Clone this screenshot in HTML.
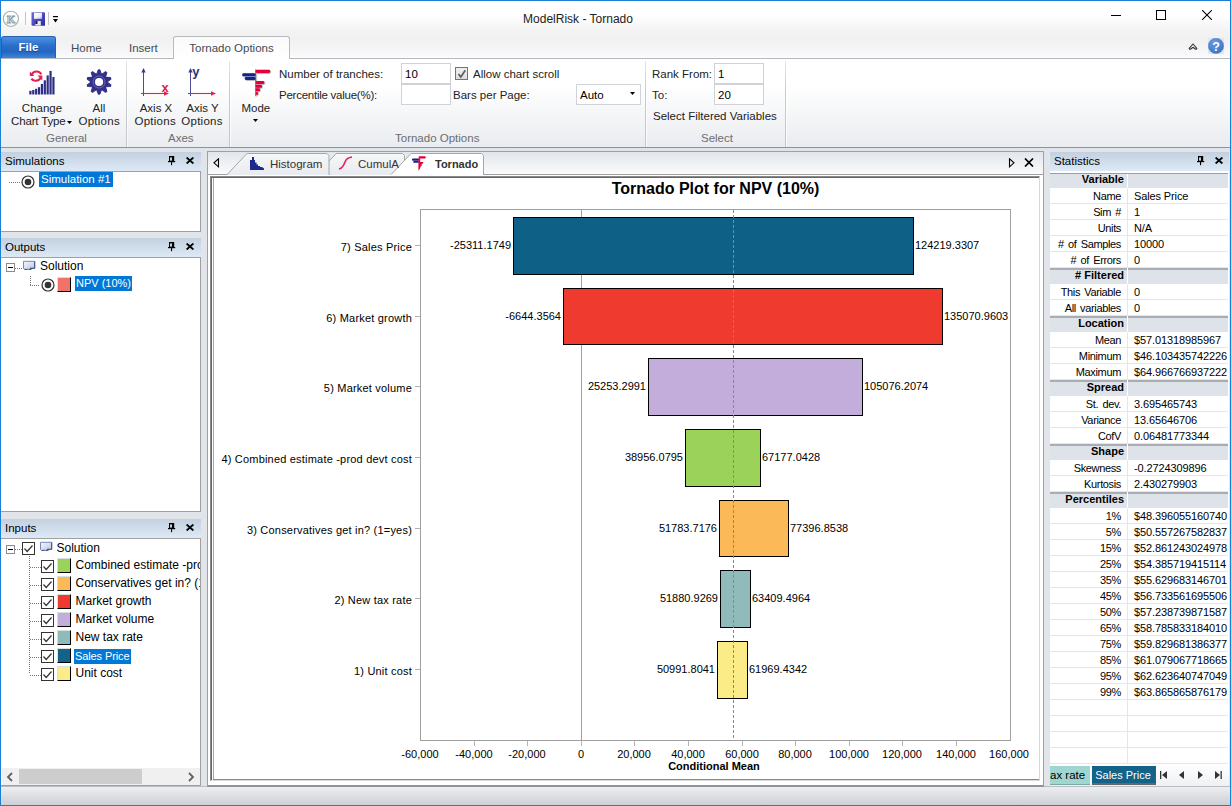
<!DOCTYPE html><html><head><meta charset="utf-8"><style>
*{margin:0;padding:0;box-sizing:border-box}
html,body{width:1231px;height:806px;overflow:hidden;background:#fff;font-family:"Liberation Sans",sans-serif;position:relative}
</style></head><body><div style="position:absolute;left:0px;top:0px;width:1231px;height:806px;background:#fff"></div>
<div style="position:absolute;left:1px;top:1px;width:1229px;height:57px;background:linear-gradient(#ffffff 0px,#ffffff 14px,#f4f4f4 28px,#f1f1f1 37px,#f4f4f4 47px,#f9f9f9 55px,#ffffff 57px)"></div>
<div style="position:absolute;left:1px;top:58px;width:1229px;height:89px;background:linear-gradient(#ffffff,#ffffff 30%,#f3f4f6 70%,#e9ecf0 100%);border-top:1px solid #b5b8be"></div>
<div style="position:absolute;left:1px;top:147px;width:1229px;height:1px;background:#8f9399"></div>
<div style="position:absolute;left:1px;top:148px;width:1229px;height:638px;background:#e1e5ea"></div>
<div style="position:absolute;left:1px;top:786px;width:1229px;height:19px;background:linear-gradient(#eceef1,#e3e5e8 30%,#cdd0d4);border-top:1px solid #b9bcc0"></div>
<div style="position:absolute;left:0px;top:0px;width:1231px;height:1px;background:#1b80d5"></div>
<div style="position:absolute;left:0px;top:805px;width:1231px;height:1px;background:#1b80d5"></div>
<div style="position:absolute;left:0px;top:0px;width:1px;height:806px;background:#1b80d5"></div>
<div style="position:absolute;left:1230px;top:0px;width:1px;height:806px;background:#1b80d5"></div>
<div style="position:absolute;left:0px;top:12px;width:1156px;font-size:12px;line-height:14px;color:#222;text-align:center;white-space:nowrap;">ModelRisk - Tornado</div>
<svg style="position:absolute;left:2px;top:10px" width="18" height="18" viewBox="0 0 18 18">
<circle cx="8.9" cy="8.85" r="7.6" fill="none" stroke="#a3b1b6" stroke-width="1.1"/>
<text x="9" y="13.2" font-size="11" font-family="Liberation Serif" font-weight="bold" text-anchor="middle" fill="#fff" stroke="#8c9ca2" stroke-width="0.9">K</text></svg>
<div style="position:absolute;left:25px;top:12px;width:1px;height:13px;background:#c4c4c4"></div>
<svg style="position:absolute;left:31px;top:12px" width="15" height="14" viewBox="0 0 15 14">
<defs><linearGradient id="fg" x1="0" y1="0" x2="1" y2="1"><stop offset="0" stop-color="#6c6cdc"/><stop offset="1" stop-color="#2a2a9c"/></linearGradient>
<linearGradient id="fl" x1="0" y1="0" x2="1" y2="1"><stop offset="0" stop-color="#ffffff"/><stop offset="0.6" stop-color="#eef0fa"/><stop offset="1" stop-color="#b9bedc"/></linearGradient></defs>
<path d="M0.5 0.3 L13.3 0.3 L14 1 L14 13.8 L1.2 13.8 L0.5 13 Z" fill="url(#fg)"/>
<rect x="3" y="0.8" width="8" height="6" fill="url(#fl)"/>
<rect x="4.3" y="9" width="5.5" height="4.5" fill="#e8e8f0"/><rect x="4.3" y="9" width="2.2" height="3" fill="#222"/>
</svg>
<div style="position:absolute;left:48px;top:12px;width:1px;height:13px;background:#c4c4c4"></div>
<svg style="position:absolute;left:53px;top:15px" width="7" height="8" viewBox="0 0 7 8">
<rect x="0" y="1" width="5" height="1.2" fill="#000"/><path d="M0 4 L5 4 L2.5 7.4 Z" fill="#000"/></svg>
<div style="position:absolute;left:1111px;top:15px;width:10px;height:1px;background:#000"></div>
<div style="position:absolute;left:1156px;top:10px;width:10px;height:10px;border:1px solid #000"></div>
<svg style="position:absolute;left:1202px;top:10px" width="10" height="10" viewBox="0 0 10 10">
<path d="M0 0 L10 10 M10 0 L0 10" stroke="#000" stroke-width="1.05"/></svg>
<div style="position:absolute;left:1px;top:36px;width:55px;height:22px;background:linear-gradient(#4a91e3,#2a6cc8 45%,#2565c2 70%,#3b86dd);border:1px solid #2a5fb0;border-bottom:none;border-radius:3px 3px 0 0"></div>
<div style="position:absolute;left:1px;top:41px;width:55px;font-size:11.5px;line-height:13.5px;color:#fff;text-align:center;white-space:nowrap;text-shadow:0 1px 1px rgba(0,0,0,0.35);font-weight:600">File</div>
<div style="position:absolute;left:71px;top:42px;font-size:11.5px;line-height:13.5px;color:#444b53;text-align:left;white-space:nowrap;">Home</div>
<div style="position:absolute;left:129px;top:42px;font-size:11.5px;line-height:13.5px;color:#444b53;text-align:left;white-space:nowrap;">Insert</div>
<div style="position:absolute;left:173px;top:36px;width:117px;height:23px;background:linear-gradient(#fafafa,#ffffff);border:1px solid #b8babe;border-bottom:none;border-radius:3px 3px 0 0"></div>
<div style="position:absolute;left:173px;top:42px;width:117px;font-size:11.5px;line-height:13.5px;color:#444b53;text-align:center;white-space:nowrap;">Tornado Options</div>
<svg style="position:absolute;left:1188px;top:42px" width="11" height="9" viewBox="0 0 11 9">
<path d="M1.2 6.3 L5 2 L8.8 6.3 Q8.6 7.4 7.6 7.2 L5 5.2 L2.4 7.2 Q1.4 7.4 1.2 6.3 Z" fill="#fff" stroke="#333" stroke-width="1.1" stroke-linejoin="round"/></svg>
<div style="position:absolute;left:1208px;top:38px;width:16px;height:16px;background:#e3e7eb"></div>
<svg style="position:absolute;left:1208px;top:38px" width="16" height="16" viewBox="0 0 16 16">
<defs><radialGradient id="hg" cx="40%" cy="30%" r="70%"><stop offset="0" stop-color="#6a9ce6"/><stop offset="1" stop-color="#3b74c9"/></radialGradient></defs>
<circle cx="8" cy="7.9" r="7.7" fill="url(#hg)" stroke="#5f86be" stroke-width="0.6"/>
<text x="8" y="12.6" font-size="12.5" font-weight="bold" font-family="Liberation Sans" text-anchor="middle" fill="#fff">?</text></svg>
<div style="position:absolute;left:126px;top:61px;width:1px;height:86px;background:linear-gradient(#e6e7e9,#c6c9cd 35%,#c3c6ca)"></div>
<div style="position:absolute;left:127px;top:61px;width:1px;height:86px;background:rgba(255,255,255,0.7)"></div>
<div style="position:absolute;left:229px;top:61px;width:1px;height:86px;background:linear-gradient(#e6e7e9,#c6c9cd 35%,#c3c6ca)"></div>
<div style="position:absolute;left:230px;top:61px;width:1px;height:86px;background:rgba(255,255,255,0.7)"></div>
<div style="position:absolute;left:645px;top:61px;width:1px;height:86px;background:linear-gradient(#e6e7e9,#c6c9cd 35%,#c3c6ca)"></div>
<div style="position:absolute;left:646px;top:61px;width:1px;height:86px;background:rgba(255,255,255,0.7)"></div>
<div style="position:absolute;left:785px;top:61px;width:1px;height:86px;background:linear-gradient(#e6e7e9,#c6c9cd 35%,#c3c6ca)"></div>
<div style="position:absolute;left:786px;top:61px;width:1px;height:86px;background:rgba(255,255,255,0.7)"></div>
<svg style="position:absolute;left:29px;top:70px" width="28" height="26" viewBox="0 0 28 26">
<g fill="#2e2e86"><rect x="0.30" y="20.8" width="2.2" height="3.7"/><rect x="3.18" y="20.0" width="2.2" height="4.5"/><rect x="6.06" y="18.8" width="2.2" height="5.7"/><rect x="8.94" y="17.2" width="2.2" height="7.3"/><rect x="11.82" y="13.9" width="2.2" height="10.6"/><rect x="14.70" y="10.3" width="2.2" height="14.2"/><rect x="17.58" y="5.4" width="2.2" height="19.1"/><rect x="20.46" y="0.9" width="2.2" height="23.6"/><rect x="23.34" y="7.0" width="2.2" height="17.5"/></g>
<path d="M12.2 4.3 C10.8 0.9 5 0.2 2.8 4.4" fill="none" stroke="#e2214f" stroke-width="2.1"/>
<path d="M0.8 1.6 L0.8 5.9 L5.4 5.9 Z" fill="#e2214f"/>
<path d="M2.4 8.6 C4.3 11.8 9.6 11.6 12 7.4" fill="none" stroke="#e2214f" stroke-width="2.1"/>
<path d="M13.3 10.6 L13.3 5.4 L8.6 5.4 Z" fill="#e2214f"/>
</svg>
<div style="position:absolute;left:0px;top:102px;width:84px;font-size:11.5px;line-height:13.5px;color:#222;text-align:center;white-space:nowrap;">Change</div>
<div style="position:absolute;left:11px;top:115px;font-size:11.5px;line-height:13.5px;color:#222;text-align:left;white-space:nowrap;letter-spacing:-0.15px">Chart Type</div>
<svg style="position:absolute;left:67px;top:121px" width="6" height="4"><path d="M0 0 L5 0 L2.5 3 Z" fill="#000"/></svg>
<svg style="position:absolute;left:85px;top:67.5px" width="28" height="28" viewBox="-14.07 -14 28 28">
<g fill="#34318c" stroke="#34318c" stroke-width="1" stroke-linejoin="round"><circle r="8.3"/><path d="M-2.5 -7.4 L-0.8 -12.2 L0.8 -12.2 L2.5 -7.4 Z" transform="rotate(0)"/><path d="M-2.5 -7.4 L-0.8 -12.2 L0.8 -12.2 L2.5 -7.4 Z" transform="rotate(36)"/><path d="M-2.5 -7.4 L-0.8 -12.2 L0.8 -12.2 L2.5 -7.4 Z" transform="rotate(72)"/><path d="M-2.5 -7.4 L-0.8 -12.2 L0.8 -12.2 L2.5 -7.4 Z" transform="rotate(108)"/><path d="M-2.5 -7.4 L-0.8 -12.2 L0.8 -12.2 L2.5 -7.4 Z" transform="rotate(144)"/><path d="M-2.5 -7.4 L-0.8 -12.2 L0.8 -12.2 L2.5 -7.4 Z" transform="rotate(180)"/><path d="M-2.5 -7.4 L-0.8 -12.2 L0.8 -12.2 L2.5 -7.4 Z" transform="rotate(216)"/><path d="M-2.5 -7.4 L-0.8 -12.2 L0.8 -12.2 L2.5 -7.4 Z" transform="rotate(252)"/><path d="M-2.5 -7.4 L-0.8 -12.2 L0.8 -12.2 L2.5 -7.4 Z" transform="rotate(288)"/><path d="M-2.5 -7.4 L-0.8 -12.2 L0.8 -12.2 L2.5 -7.4 Z" transform="rotate(324)"/></g>
<circle r="6" fill="none" stroke="#8a88c0" stroke-width="0.6"/><circle r="4.1" fill="#fff"/>
</svg>
<div style="position:absolute;left:84px;top:102px;width:30px;font-size:11.5px;line-height:13.5px;color:#222;text-align:center;white-space:nowrap;">All</div>
<div style="position:absolute;left:78.5px;top:115px;font-size:11.5px;line-height:13.5px;color:#222;text-align:left;white-space:nowrap;letter-spacing:0.25px">Options</div>
<div style="position:absolute;left:46px;top:132px;font-size:11.5px;line-height:13.5px;color:#6d6d6d;text-align:left;white-space:nowrap;">General</div>
<svg style="position:absolute;left:139px;top:66px" width="32" height="32" viewBox="0 0 32 32">
<path d="M4.5 3 L4.5 30" stroke="#4b4b9a" stroke-width="1"/><path d="M2.3 6.5 L4.5 2 L6.7 6.5 Z" fill="#3a3a8c"/>
<path d="M2 27.5 L27 27.5" stroke="#e2214f" stroke-width="1.1"/><path d="M25 25.3 L30 27.5 L25 29.7 Z" fill="#e2214f"/>
<text x="22.6" y="25.6" font-size="13" font-weight="bold" font-family="Liberation Sans" fill="#e2214f">x</text>
</svg>
<div style="position:absolute;left:135px;top:102px;width:42px;font-size:11.5px;line-height:13.5px;color:#222;text-align:center;white-space:nowrap;">Axis X</div>
<div style="position:absolute;left:134.5px;top:115px;font-size:11.5px;line-height:13.5px;color:#222;text-align:left;white-space:nowrap;letter-spacing:0.25px">Options</div>
<svg style="position:absolute;left:186px;top:66px" width="32" height="32" viewBox="0 0 32 32">
<path d="M4.5 3 L4.5 30" stroke="#4b4b9a" stroke-width="1"/><path d="M2.3 6.5 L4.5 2 L6.7 6.5 Z" fill="#3a3a8c"/>
<path d="M2 27.5 L27 27.5" stroke="#e2214f" stroke-width="1.1"/><path d="M25 25.3 L30 27.5 L25 29.7 Z" fill="#e2214f"/>
<text x="6.3" y="10" font-size="13" font-weight="bold" font-family="Liberation Sans" fill="#2e2e86">y</text>
</svg>
<div style="position:absolute;left:181.5px;top:102px;width:42px;font-size:11.5px;line-height:13.5px;color:#222;text-align:center;white-space:nowrap;">Axis Y</div>
<div style="position:absolute;left:181.3px;top:115px;font-size:11.5px;line-height:13.5px;color:#222;text-align:left;white-space:nowrap;letter-spacing:0.25px">Options</div>
<div style="position:absolute;left:168px;top:132px;font-size:11.5px;line-height:13.5px;color:#6d6d6d;text-align:left;white-space:nowrap;">Axes</div>
<svg style="position:absolute;left:236px;top:64px" width="44" height="36" viewBox="0 0 44 36">
<defs><filter id="sh" x="-20%" y="-20%" width="150%" height="150%"><feDropShadow dx="0.6" dy="0.6" stdDeviation="0.5" flood-color="#000" flood-opacity="0.45"/></filter></defs>
<g filter="url(#sh)">
<rect x="19.2" y="5.4" width="0.9" height="26.6" fill="#777"/>
<rect x="19.6" y="5.8" width="14.6" height="3.1" rx="1.4" fill="#e6003a"/>
<rect x="6.2" y="9.2" width="13.4" height="3.1" rx="1.4" fill="#16208a"/>
<rect x="8.7" y="13" width="10.9" height="3" rx="1.4" fill="#16208a"/>
<rect x="19.6" y="17" width="8.7" height="2.9" rx="1.2" fill="#e6003a"/>
<rect x="19.6" y="20.8" width="6.4" height="2.9" rx="1.2" fill="#e6003a"/>
<rect x="19.6" y="24.3" width="4.4" height="2.9" rx="1.2" fill="#e6003a"/>
<rect x="19.6" y="27.9" width="2.4" height="2.9" rx="1" fill="#e6003a"/>
</g></svg>
<div style="position:absolute;left:241.5px;top:102px;font-size:11.5px;line-height:13.5px;color:#222;text-align:left;white-space:nowrap;">Mode</div>
<svg style="position:absolute;left:253px;top:119px" width="6" height="4"><path d="M0 0 L5 0 L2.5 3 Z" fill="#000"/></svg>
<div style="position:absolute;left:279px;top:68px;font-size:11.5px;line-height:13.5px;color:#222;text-align:left;white-space:nowrap;">Number of tranches:</div>
<div style="position:absolute;left:279px;top:89px;font-size:11.5px;line-height:13.5px;color:#222;text-align:left;white-space:nowrap;letter-spacing:-0.25px">Percentile value(%):</div>
<div style="position:absolute;left:401px;top:63px;width:50px;height:21px;background:#fff;border:1px solid #cfd2d6"></div>
<div style="position:absolute;left:401px;top:84px;width:50px;height:21px;background:#fff;border:1px solid #cfd2d6"></div>
<div style="position:absolute;left:405px;top:68px;font-size:11.5px;line-height:13.5px;color:#000;text-align:left;white-space:nowrap;">10</div>
<div style="position:absolute;left:455px;top:67px;width:13px;height:13px;background:linear-gradient(#f0f0f0,#dedede);border:1px solid #747474"></div>
<svg style="position:absolute;left:457px;top:69px" width="10" height="10"><path d="M1.5 5 L3.8 8 L8.3 1.2" fill="none" stroke="#5e5e5e" stroke-width="1.7"/></svg>
<div style="position:absolute;left:473px;top:68px;font-size:11.5px;line-height:13.5px;color:#222;text-align:left;white-space:nowrap;">Allow chart scroll</div>
<div style="position:absolute;left:453px;top:89px;font-size:11.5px;line-height:13.5px;color:#222;text-align:left;white-space:nowrap;">Bars per Page:</div>
<div style="position:absolute;left:576px;top:84px;width:65px;height:21px;background:#fff;border:1px solid #cfd2d6"></div>
<div style="position:absolute;left:580px;top:89px;font-size:11.5px;line-height:13.5px;color:#000;text-align:left;white-space:nowrap;">Auto</div>
<svg style="position:absolute;left:630px;top:92px" width="6" height="4"><path d="M0 0 L5 0 L2.5 3 Z" fill="#000"/></svg>
<div style="position:absolute;left:395px;top:132px;font-size:11.5px;line-height:13.5px;color:#6d6d6d;text-align:left;white-space:nowrap;">Tornado Options</div>
<div style="position:absolute;left:652px;top:68px;font-size:11.5px;line-height:13.5px;color:#222;text-align:left;white-space:nowrap;">Rank From:</div>
<div style="position:absolute;left:652px;top:89px;font-size:11.5px;line-height:13.5px;color:#222;text-align:left;white-space:nowrap;">To:</div>
<div style="position:absolute;left:714px;top:63px;width:50px;height:21px;background:#fff;border:1px solid #cfd2d6"></div>
<div style="position:absolute;left:714px;top:84px;width:50px;height:21px;background:#fff;border:1px solid #cfd2d6"></div>
<div style="position:absolute;left:718px;top:68px;font-size:11.5px;line-height:13.5px;color:#000;text-align:left;white-space:nowrap;">1</div>
<div style="position:absolute;left:718px;top:89px;font-size:11.5px;line-height:13.5px;color:#000;text-align:left;white-space:nowrap;">20</div>
<div style="position:absolute;left:653px;top:110px;font-size:11.5px;line-height:13.5px;color:#222;text-align:left;white-space:nowrap;">Select Filtered Variables</div>
<div style="position:absolute;left:701px;top:132px;font-size:11.5px;line-height:13.5px;color:#6d6d6d;text-align:left;white-space:nowrap;">Select</div>
<div style="position:absolute;left:1px;top:152px;width:200px;height:19px;background:linear-gradient(#c3d0df,#dde9f6);"></div>
<div style="position:absolute;left:5px;top:155px;font-size:11.5px;line-height:13.5px;color:#000;text-align:left;white-space:nowrap;">Simulations</div>
<svg style="position:absolute;left:167px;top:155px" width="10" height="11" viewBox="0 0 10 11">
<rect x="2" y="1" width="5.2" height="5.2" fill="#000"/><rect x="3.2" y="2.4" width="1.6" height="3.2" fill="#fff"/>
<rect x="1" y="6" width="7.2" height="1.2" fill="#000"/><rect x="4" y="7" width="1.1" height="3.2" fill="#000"/></svg>
<svg style="position:absolute;left:186px;top:157px" width="8" height="7" viewBox="0 0 8 7">
<path d="M0.6 0.5 L7.4 6.5 M7.4 0.5 L0.6 6.5" stroke="#000" stroke-width="1.8"/></svg>
<div style="position:absolute;left:1px;top:171px;width:200px;height:61px;background:#fff;border-right:1px solid #a0a0a0;border-bottom:1px solid #a0a0a0;border-top:1px solid #a0a0a0"></div>
<div style="position:absolute;left:1px;top:238px;width:200px;height:19px;background:linear-gradient(#c3d0df,#dde9f6);"></div>
<div style="position:absolute;left:5px;top:241px;font-size:11.5px;line-height:13.5px;color:#000;text-align:left;white-space:nowrap;">Outputs</div>
<svg style="position:absolute;left:167px;top:241px" width="10" height="11" viewBox="0 0 10 11">
<rect x="2" y="1" width="5.2" height="5.2" fill="#000"/><rect x="3.2" y="2.4" width="1.6" height="3.2" fill="#fff"/>
<rect x="1" y="6" width="7.2" height="1.2" fill="#000"/><rect x="4" y="7" width="1.1" height="3.2" fill="#000"/></svg>
<svg style="position:absolute;left:186px;top:243px" width="8" height="7" viewBox="0 0 8 7">
<path d="M0.6 0.5 L7.4 6.5 M7.4 0.5 L0.6 6.5" stroke="#000" stroke-width="1.8"/></svg>
<div style="position:absolute;left:1px;top:257px;width:200px;height:255px;background:#fff;border-right:1px solid #a0a0a0;border-bottom:1px solid #a0a0a0;border-top:1px solid #a0a0a0"></div>
<div style="position:absolute;left:1px;top:519px;width:200px;height:19px;background:linear-gradient(#c3d0df,#dde9f6);"></div>
<div style="position:absolute;left:5px;top:522px;font-size:11.5px;line-height:13.5px;color:#000;text-align:left;white-space:nowrap;">Inputs</div>
<svg style="position:absolute;left:167px;top:522px" width="10" height="11" viewBox="0 0 10 11">
<rect x="2" y="1" width="5.2" height="5.2" fill="#000"/><rect x="3.2" y="2.4" width="1.6" height="3.2" fill="#fff"/>
<rect x="1" y="6" width="7.2" height="1.2" fill="#000"/><rect x="4" y="7" width="1.1" height="3.2" fill="#000"/></svg>
<svg style="position:absolute;left:186px;top:524px" width="8" height="7" viewBox="0 0 8 7">
<path d="M0.6 0.5 L7.4 6.5 M7.4 0.5 L0.6 6.5" stroke="#000" stroke-width="1.8"/></svg>
<div style="position:absolute;left:1px;top:538px;width:200px;height:248px;background:#fff;border-right:1px solid #a0a0a0;border-bottom:1px solid #a0a0a0;border-top:1px solid #a0a0a0"></div>
<div style="position:absolute;left:9px;top:182px;width:11px;height:1px;background:repeating-linear-gradient(90deg,#777 0 1px,transparent 1px 2px)"></div>
<svg style="position:absolute;left:21px;top:175px" width="14" height="14" viewBox="0 0 14 14">
<circle cx="7" cy="7" r="6" fill="#fff" stroke="#333" stroke-width="1.2"/><circle cx="7" cy="7" r="3.3" fill="#333"/></svg>
<div style="position:absolute;left:39px;top:172px;height:15px;padding:0 2px;background:#0078d7;color:#fff;font-size:11.5px;line-height:15px;white-space:nowrap">Simulation #1</div>
<div style="position:absolute;left:6px;top:263px;width:9px;height:9px;border:1px solid #8a8a8a;background:#fff"></div>
<div style="position:absolute;left:8px;top:267px;width:5px;height:1px;background:#000"></div>
<div style="position:absolute;left:15px;top:268px;width:7px;height:1px;background:repeating-linear-gradient(90deg,#777 0 1px,transparent 1px 2px)"></div>
<svg style="position:absolute;left:22px;top:260px" width="15" height="14" viewBox="0 0 15 14">
<defs><linearGradient id="sg22260" x1="0" y1="0" x2="1" y2="1"><stop offset="0" stop-color="#f6f8fc"/><stop offset="1" stop-color="#bcc6de"/></linearGradient></defs>
<path d="M1.5 1.3 L12.7 1.3 L12.7 8.3 L8 8.3 L7 9.3 L2.5 9.3 L1.5 8.3 Z" fill="url(#sg22260)" stroke="#7389b8" stroke-width="1"/>
<path d="M12.7 1.5 L12.7 8.3 L8 8.3" fill="none" stroke="#3c4f78" stroke-width="1"/>
<path d="M2.5 9.5 L5.5 9.5 M6.8 9.5 L9.5 9.5" stroke="#4b5f8c" stroke-width="1.2"/>
</svg>
<div style="position:absolute;left:40px;top:258.5px;font-size:12px;line-height:14px;color:#000;text-align:left;white-space:nowrap;">Solution</div>
<div style="position:absolute;left:30px;top:276px;width:1px;height:9px;background:repeating-linear-gradient(180deg,#777 0 1px,transparent 1px 2px)"></div>
<div style="position:absolute;left:30px;top:285px;width:10px;height:1px;background:repeating-linear-gradient(90deg,#777 0 1px,transparent 1px 2px)"></div>
<svg style="position:absolute;left:41px;top:278px" width="14" height="14" viewBox="0 0 14 14">
<circle cx="7" cy="7" r="6" fill="#fff" stroke="#333" stroke-width="1.2"/><circle cx="7" cy="7" r="3.3" fill="#333"/></svg>
<div style="position:absolute;left:57px;top:277px;width:14px;height:15px;background:#f0736a;border-right:1px solid #000;border-bottom:1px solid #000;border-left:1px solid #d8e0e0;border-top:1px solid #d8e0e0"></div>
<div style="position:absolute;left:75px;top:276px;height:15px;padding:0 1px;background:#0078d7;color:#fff;font-size:11.5px;line-height:15px;white-space:nowrap"><span style="font-size:11px">NPV (10%)</span></div>
<div style="position:absolute;left:6px;top:545px;width:9px;height:9px;border:1px solid #8a8a8a;background:#fff"></div>
<div style="position:absolute;left:8px;top:549px;width:5px;height:1px;background:#000"></div>
<div style="position:absolute;left:15px;top:549px;width:7px;height:1px;background:repeating-linear-gradient(90deg,#777 0 1px,transparent 1px 2px)"></div>
<div style="position:absolute;left:22px;top:542px;width:13px;height:13px;border:1px solid #333;background:#fff"></div>
<svg style="position:absolute;left:23px;top:543px" width="11" height="11"><path d="M1.5 5.5 L4.2 8.5 L9.5 2.5" fill="none" stroke="#333" stroke-width="1.2"/></svg>
<svg style="position:absolute;left:39px;top:541px" width="15" height="14" viewBox="0 0 15 14">
<defs><linearGradient id="sg39541" x1="0" y1="0" x2="1" y2="1"><stop offset="0" stop-color="#f6f8fc"/><stop offset="1" stop-color="#bcc6de"/></linearGradient></defs>
<path d="M1.5 1.3 L12.7 1.3 L12.7 8.3 L8 8.3 L7 9.3 L2.5 9.3 L1.5 8.3 Z" fill="url(#sg39541)" stroke="#7389b8" stroke-width="1"/>
<path d="M12.7 1.5 L12.7 8.3 L8 8.3" fill="none" stroke="#3c4f78" stroke-width="1"/>
<path d="M2.5 9.5 L5.5 9.5 M6.8 9.5 L9.5 9.5" stroke="#4b5f8c" stroke-width="1.2"/>
</svg>
<div style="position:absolute;left:56.5px;top:540.5px;font-size:12px;line-height:14px;color:#000;text-align:left;white-space:nowrap;">Solution</div>
<div style="position:absolute;left:29px;top:556px;width:1px;height:118px;background:repeating-linear-gradient(180deg,#777 0 1px,transparent 1px 2px)"></div>
<div style="position:absolute;left:30px;top:567px;width:11px;height:1px;background:repeating-linear-gradient(90deg,#777 0 1px,transparent 1px 2px)"></div>
<div style="position:absolute;left:41px;top:560px;width:13px;height:13px;border:1px solid #333;background:#fff"></div>
<svg style="position:absolute;left:42px;top:561px" width="11" height="11"><path d="M1.5 5.5 L4.2 8.5 L9.5 2.5" fill="none" stroke="#333" stroke-width="1.2"/></svg>
<div style="position:absolute;left:57px;top:558px;width:14px;height:15px;background:#9bd35a;border-right:1px solid #000;border-bottom:1px solid #000;border-left:1px solid #d8e0e0;border-top:1px solid #d8e0e0"></div>
<div style="position:absolute;left:75.5px;top:557.5px;font-size:12px;line-height:14px;color:#000;text-align:left;white-space:nowrap;">Combined estimate -prod devt cost</div>
<div style="position:absolute;left:30px;top:585px;width:11px;height:1px;background:repeating-linear-gradient(90deg,#777 0 1px,transparent 1px 2px)"></div>
<div style="position:absolute;left:41px;top:578px;width:13px;height:13px;border:1px solid #333;background:#fff"></div>
<svg style="position:absolute;left:42px;top:579px" width="11" height="11"><path d="M1.5 5.5 L4.2 8.5 L9.5 2.5" fill="none" stroke="#333" stroke-width="1.2"/></svg>
<div style="position:absolute;left:57px;top:576px;width:14px;height:15px;background:#fbb957;border-right:1px solid #000;border-bottom:1px solid #000;border-left:1px solid #d8e0e0;border-top:1px solid #d8e0e0"></div>
<div style="position:absolute;left:75.5px;top:575.5px;font-size:12px;line-height:14px;color:#000;text-align:left;white-space:nowrap;">Conservatives get in? (1=yes)</div>
<div style="position:absolute;left:30px;top:603px;width:11px;height:1px;background:repeating-linear-gradient(90deg,#777 0 1px,transparent 1px 2px)"></div>
<div style="position:absolute;left:41px;top:596px;width:13px;height:13px;border:1px solid #333;background:#fff"></div>
<svg style="position:absolute;left:42px;top:597px" width="11" height="11"><path d="M1.5 5.5 L4.2 8.5 L9.5 2.5" fill="none" stroke="#333" stroke-width="1.2"/></svg>
<div style="position:absolute;left:57px;top:594px;width:14px;height:15px;background:#ef3a30;border-right:1px solid #000;border-bottom:1px solid #000;border-left:1px solid #d8e0e0;border-top:1px solid #d8e0e0"></div>
<div style="position:absolute;left:75.5px;top:593.5px;font-size:12px;line-height:14px;color:#000;text-align:left;white-space:nowrap;">Market growth</div>
<div style="position:absolute;left:30px;top:621px;width:11px;height:1px;background:repeating-linear-gradient(90deg,#777 0 1px,transparent 1px 2px)"></div>
<div style="position:absolute;left:41px;top:614px;width:13px;height:13px;border:1px solid #333;background:#fff"></div>
<svg style="position:absolute;left:42px;top:615px" width="11" height="11"><path d="M1.5 5.5 L4.2 8.5 L9.5 2.5" fill="none" stroke="#333" stroke-width="1.2"/></svg>
<div style="position:absolute;left:57px;top:612px;width:14px;height:15px;background:#c3aedb;border-right:1px solid #000;border-bottom:1px solid #000;border-left:1px solid #d8e0e0;border-top:1px solid #d8e0e0"></div>
<div style="position:absolute;left:75.5px;top:611.5px;font-size:12px;line-height:14px;color:#000;text-align:left;white-space:nowrap;">Market volume</div>
<div style="position:absolute;left:30px;top:639px;width:11px;height:1px;background:repeating-linear-gradient(90deg,#777 0 1px,transparent 1px 2px)"></div>
<div style="position:absolute;left:41px;top:632px;width:13px;height:13px;border:1px solid #333;background:#fff"></div>
<svg style="position:absolute;left:42px;top:633px" width="11" height="11"><path d="M1.5 5.5 L4.2 8.5 L9.5 2.5" fill="none" stroke="#333" stroke-width="1.2"/></svg>
<div style="position:absolute;left:57px;top:630px;width:14px;height:15px;background:#8fbcbb;border-right:1px solid #000;border-bottom:1px solid #000;border-left:1px solid #d8e0e0;border-top:1px solid #d8e0e0"></div>
<div style="position:absolute;left:75.5px;top:629.5px;font-size:12px;line-height:14px;color:#000;text-align:left;white-space:nowrap;">New tax rate</div>
<div style="position:absolute;left:30px;top:657px;width:11px;height:1px;background:repeating-linear-gradient(90deg,#777 0 1px,transparent 1px 2px)"></div>
<div style="position:absolute;left:41px;top:650px;width:13px;height:13px;border:1px solid #333;background:#fff"></div>
<svg style="position:absolute;left:42px;top:651px" width="11" height="11"><path d="M1.5 5.5 L4.2 8.5 L9.5 2.5" fill="none" stroke="#333" stroke-width="1.2"/></svg>
<div style="position:absolute;left:57px;top:648px;width:14px;height:15px;background:#136287;border-right:1px solid #000;border-bottom:1px solid #000;border-left:1px solid #d8e0e0;border-top:1px solid #d8e0e0"></div>
<div style="position:absolute;left:74px;top:649px;height:15px;padding:0 1px;background:#0078d7;color:#fff;font-size:11.5px;line-height:15px;white-space:nowrap"><span style="font-size:11px;letter-spacing:-0.1px">Sales Price</span></div>
<div style="position:absolute;left:30px;top:675px;width:11px;height:1px;background:repeating-linear-gradient(90deg,#777 0 1px,transparent 1px 2px)"></div>
<div style="position:absolute;left:41px;top:668px;width:13px;height:13px;border:1px solid #333;background:#fff"></div>
<svg style="position:absolute;left:42px;top:669px" width="11" height="11"><path d="M1.5 5.5 L4.2 8.5 L9.5 2.5" fill="none" stroke="#333" stroke-width="1.2"/></svg>
<div style="position:absolute;left:57px;top:666px;width:14px;height:15px;background:#fbec88;border-right:1px solid #000;border-bottom:1px solid #000;border-left:1px solid #d8e0e0;border-top:1px solid #d8e0e0"></div>
<div style="position:absolute;left:75.5px;top:665.5px;font-size:12px;line-height:14px;color:#000;text-align:left;white-space:nowrap;">Unit cost</div>
<div style="position:absolute;left:201px;top:538px;width:6px;height:248px;background:#e1e5ea"></div>
<div style="position:absolute;left:200px;top:538px;width:1px;height:248px;background:#a0a0a0"></div>
<div style="position:absolute;left:2px;top:768px;width:198px;height:17px;background:#f0f0f0"></div>
<div style="position:absolute;left:19px;top:769px;width:123px;height:15px;background:#cdcdcd"></div>
<svg style="position:absolute;left:6px;top:772px" width="8" height="10"><path d="M6 1 L2 5 L6 9" fill="none" stroke="#606060" stroke-width="1.8"/></svg>
<svg style="position:absolute;left:187px;top:772px" width="8" height="10"><path d="M2 1 L6 5 L2 9" fill="none" stroke="#606060" stroke-width="1.8"/></svg>
<div style="position:absolute;left:207px;top:151px;width:837px;height:636px;background:#fff;border:1px solid #a0a0a0;border-bottom:2px solid #909398"></div>
<div style="position:absolute;left:208px;top:152px;width:835px;height:22px;background:linear-gradient(#e2e6eb,#fbfbfc)"></div>
<div style="position:absolute;left:208px;top:174px;width:835px;height:1px;background:#a0a0a0"></div>
<svg style="position:absolute;left:213px;top:158px" width="7" height="10"><path d="M5.5 0.8 L5.5 8.8 L1 4.8 Z" fill="none" stroke="#000" stroke-width="1.1"/></svg>
<svg style="position:absolute;left:1008px;top:158px" width="7" height="10"><path d="M1.5 0.8 L1.5 8.8 L6 4.8 Z" fill="none" stroke="#000" stroke-width="1.1"/></svg>
<svg style="position:absolute;left:1024px;top:158px" width="10" height="9" viewBox="0 0 10 9"><path d="M1 0.5 L9 8.5 M9 0.5 L1 8.5" stroke="#000" stroke-width="1.7"/></svg>
<svg style="position:absolute;left:208px;top:152px" width="300" height="24" viewBox="0 0 300 24">
<defs><linearGradient id="tg" x1="0" y1="0" x2="0" y2="1"><stop offset="0" stop-color="#f6f7f9"/><stop offset="1" stop-color="#e8ebef"/></linearGradient></defs>
<path d="M107.8 23 L128.3 1.5 L194.5 1.5 L196.5 3.5 L196.5 23" fill="url(#tg)" stroke="#a6a6a6" stroke-width="1"/>
<path d="M18.6 23 L39 1.5 L119 1.5 L121 3.5 L121 23" fill="url(#tg)" stroke="#a6a6a6" stroke-width="1"/>
<path d="M182.7 23 L203 1.5 L273.5 1.5 L275.5 3.5 L275.5 23" fill="#ffffff" stroke="#a6a6a6" stroke-width="1"/>
<rect x="183.5" y="22" width="91.5" height="2" fill="#fff"/>
</svg>
<svg style="position:absolute;left:250px;top:157px" width="14" height="13" viewBox="0 0 14 13">
<path d="M0 13 L0 3 L2 3 L2 0 L4 0 L4 3 L5 3 L5 5.5 L6.5 5.5 L6.5 7.5 L8 7.5 L8 9 L10 9 L10 10 L12 10 L14 11.5 L14 13 Z" fill="#1f2a8f"/></svg>
<div style="position:absolute;left:270px;top:158px;font-size:11.5px;line-height:13.5px;color:#333;text-align:left;white-space:nowrap;">Histogram</div>
<svg style="position:absolute;left:338px;top:156px" width="15" height="14" viewBox="0 0 15 14">
<path d="M1 13 C5 12 6 9 7 6 C8 3 10 1.5 14 1" fill="none" stroke="#e0245a" stroke-width="1.6"/></svg>
<div style="position:absolute;left:358px;top:158px;font-size:11.5px;line-height:13.5px;color:#333;text-align:left;white-space:nowrap;">CumulA</div>
<svg style="position:absolute;left:411px;top:155px" width="17" height="17" viewBox="0 0 17 17">
<rect x="7.6" y="1.2" width="7.2" height="2.4" rx="1" fill="#e6003a"/>
<rect x="1" y="3.6" width="7" height="2.1" rx="1" fill="#16208a"/>
<rect x="2.2" y="6" width="5.8" height="1.8" rx="0.9" fill="#16208a"/>
<path d="M7.4 3.3 L9.2 3.3 L9.2 7 L12.4 7 L11.6 9 L9.2 9 L11 9.4 L10.6 11 L9.2 11 L10 11.4 L9 13 L9.2 13 L8 15.2 L7.4 15.2 Z" fill="#e6003a"/>
</svg>
<div style="position:absolute;left:435px;top:158px;font-size:11px;line-height:13px;color:#333;font-weight:bold;text-align:left;white-space:nowrap;">Tornado</div>
<div style="position:absolute;left:210px;top:176px;width:830px;height:605px;background:#fff;border-top:1px solid #8a8a8a;border-left:1px solid #8a8a8a;border-right:1px solid #d8d8d8;border-bottom:1px solid #d8d8d8"></div>
<div style="position:absolute;left:211px;top:177px;width:828px;height:1px;background:#666"></div>
<div style="position:absolute;left:211px;top:177px;width:1px;height:603px;background:#666"></div>
<div style="position:absolute;left:213px;top:178px;width:1px;height:602px;background:#a8a8a8"></div>
<div style="position:absolute;left:213px;top:779px;width:826px;height:1px;background:#8a8a8a"></div>
<div style="position:absolute;left:210px;top:180px;width:1011px;font-size:16px;line-height:18px;color:#000;font-weight:bold;text-align:center;white-space:nowrap;">Tornado Plot for NPV (10%)</div>
<div style="position:absolute;left:420px;top:209px;width:591px;height:532px;border:1px solid #a0a0a0"></div>
<div style="position:absolute;left:581px;top:209px;width:1px;height:531px;background:#a0a0a0"></div>
<div style="position:absolute;left:513px;top:217px;width:401px;height:58px;background:#0f6086;border:1px solid #000"></div>
<div style="position:absolute;left:0px;top:241px;width:412px;font-size:11px;line-height:13px;color:#000;text-align:right;white-space:nowrap;letter-spacing:0.2px">7) Sales Price</div>
<div style="position:absolute;left:415px;top:245px;width:5px;height:1px;background:#b0b0b0"></div>
<div style="position:absolute;left:211px;top:239px;width:300px;font-size:11px;line-height:13px;color:#000;text-align:right;white-space:nowrap;">-25311.1749</div>
<div style="position:absolute;left:915px;top:239px;font-size:11px;line-height:13px;color:#000;text-align:left;white-space:nowrap;">124219.3307</div>
<div style="position:absolute;left:563px;top:288px;width:380px;height:57px;background:#ef3a30;border:1px solid #000"></div>
<div style="position:absolute;left:0px;top:312px;width:412px;font-size:11px;line-height:13px;color:#000;text-align:right;white-space:nowrap;letter-spacing:0.2px">6) Market growth</div>
<div style="position:absolute;left:415px;top:316px;width:5px;height:1px;background:#b0b0b0"></div>
<div style="position:absolute;left:261px;top:310px;width:300px;font-size:11px;line-height:13px;color:#000;text-align:right;white-space:nowrap;">-6644.3564</div>
<div style="position:absolute;left:944px;top:310px;font-size:11px;line-height:13px;color:#000;text-align:left;white-space:nowrap;">135070.9603</div>
<div style="position:absolute;left:648px;top:358px;width:215px;height:58px;background:#c3aedb;border:1px solid #000"></div>
<div style="position:absolute;left:0px;top:382px;width:412px;font-size:11px;line-height:13px;color:#000;text-align:right;white-space:nowrap;letter-spacing:0.2px">5) Market volume</div>
<div style="position:absolute;left:415px;top:386px;width:5px;height:1px;background:#b0b0b0"></div>
<div style="position:absolute;left:346px;top:380px;width:300px;font-size:11px;line-height:13px;color:#000;text-align:right;white-space:nowrap;">25253.2991</div>
<div style="position:absolute;left:864px;top:380px;font-size:11px;line-height:13px;color:#000;text-align:left;white-space:nowrap;">105076.2074</div>
<div style="position:absolute;left:685px;top:429px;width:76px;height:58px;background:#9bd35a;border:1px solid #000"></div>
<div style="position:absolute;left:0px;top:453px;width:412px;font-size:11px;line-height:13px;color:#000;text-align:right;white-space:nowrap;letter-spacing:0.2px">4) Combined estimate -prod devt cost</div>
<div style="position:absolute;left:415px;top:457px;width:5px;height:1px;background:#b0b0b0"></div>
<div style="position:absolute;left:383px;top:451px;width:300px;font-size:11px;line-height:13px;color:#000;text-align:right;white-space:nowrap;">38956.0795</div>
<div style="position:absolute;left:762px;top:451px;font-size:11px;line-height:13px;color:#000;text-align:left;white-space:nowrap;">67177.0428</div>
<div style="position:absolute;left:719px;top:500px;width:70px;height:57px;background:#fbb957;border:1px solid #000"></div>
<div style="position:absolute;left:0px;top:524px;width:412px;font-size:11px;line-height:13px;color:#000;text-align:right;white-space:nowrap;letter-spacing:0.2px">3) Conservatives get in? (1=yes)</div>
<div style="position:absolute;left:415px;top:528px;width:5px;height:1px;background:#b0b0b0"></div>
<div style="position:absolute;left:417px;top:522px;width:300px;font-size:11px;line-height:13px;color:#000;text-align:right;white-space:nowrap;">51783.7176</div>
<div style="position:absolute;left:790px;top:522px;font-size:11px;line-height:13px;color:#000;text-align:left;white-space:nowrap;">77396.8538</div>
<div style="position:absolute;left:720px;top:570px;width:31px;height:58px;background:#8fbcbb;border:1px solid #000"></div>
<div style="position:absolute;left:0px;top:594px;width:412px;font-size:11px;line-height:13px;color:#000;text-align:right;white-space:nowrap;letter-spacing:0.2px">2) New tax rate</div>
<div style="position:absolute;left:415px;top:598px;width:5px;height:1px;background:#b0b0b0"></div>
<div style="position:absolute;left:418px;top:592px;width:300px;font-size:11px;line-height:13px;color:#000;text-align:right;white-space:nowrap;">51880.9269</div>
<div style="position:absolute;left:752px;top:592px;font-size:11px;line-height:13px;color:#000;text-align:left;white-space:nowrap;">63409.4964</div>
<div style="position:absolute;left:717px;top:641px;width:31px;height:58px;background:#fbec88;border:1px solid #000"></div>
<div style="position:absolute;left:0px;top:665px;width:412px;font-size:11px;line-height:13px;color:#000;text-align:right;white-space:nowrap;letter-spacing:0.2px">1) Unit cost</div>
<div style="position:absolute;left:415px;top:669px;width:5px;height:1px;background:#b0b0b0"></div>
<div style="position:absolute;left:415px;top:663px;width:300px;font-size:11px;line-height:13px;color:#000;text-align:right;white-space:nowrap;">50991.8041</div>
<div style="position:absolute;left:749px;top:663px;font-size:11px;line-height:13px;color:#000;text-align:left;white-space:nowrap;">61969.4342</div>
<div style="position:absolute;left:733px;top:210px;width:1px;height:530px;background:repeating-linear-gradient(180deg,#f26522 0 3px,transparent 3px 5px)"></div>
<div style="position:absolute;left:370px;top:748px;width:100px;font-size:11px;line-height:13px;color:#000;text-align:center;white-space:nowrap;">-60,000</div>
<div style="position:absolute;left:474px;top:741px;width:1px;height:5px;background:#b4b4b4"></div>
<div style="position:absolute;left:424px;top:748px;width:100px;font-size:11px;line-height:13px;color:#000;text-align:center;white-space:nowrap;">-40,000</div>
<div style="position:absolute;left:527px;top:741px;width:1px;height:5px;background:#b4b4b4"></div>
<div style="position:absolute;left:477px;top:748px;width:100px;font-size:11px;line-height:13px;color:#000;text-align:center;white-space:nowrap;">-20,000</div>
<div style="position:absolute;left:581px;top:741px;width:1px;height:5px;background:#b4b4b4"></div>
<div style="position:absolute;left:531px;top:748px;width:100px;font-size:11px;line-height:13px;color:#000;text-align:center;white-space:nowrap;">0</div>
<div style="position:absolute;left:634px;top:741px;width:1px;height:5px;background:#b4b4b4"></div>
<div style="position:absolute;left:584px;top:748px;width:100px;font-size:11px;line-height:13px;color:#000;text-align:center;white-space:nowrap;">20,000</div>
<div style="position:absolute;left:688px;top:741px;width:1px;height:5px;background:#b4b4b4"></div>
<div style="position:absolute;left:638px;top:748px;width:100px;font-size:11px;line-height:13px;color:#000;text-align:center;white-space:nowrap;">40,000</div>
<div style="position:absolute;left:742px;top:741px;width:1px;height:5px;background:#b4b4b4"></div>
<div style="position:absolute;left:692px;top:748px;width:100px;font-size:11px;line-height:13px;color:#000;text-align:center;white-space:nowrap;">60,000</div>
<div style="position:absolute;left:795px;top:741px;width:1px;height:5px;background:#b4b4b4"></div>
<div style="position:absolute;left:745px;top:748px;width:100px;font-size:11px;line-height:13px;color:#000;text-align:center;white-space:nowrap;">80,000</div>
<div style="position:absolute;left:849px;top:741px;width:1px;height:5px;background:#b4b4b4"></div>
<div style="position:absolute;left:799px;top:748px;width:100px;font-size:11px;line-height:13px;color:#000;text-align:center;white-space:nowrap;">100,000</div>
<div style="position:absolute;left:902px;top:741px;width:1px;height:5px;background:#b4b4b4"></div>
<div style="position:absolute;left:852px;top:748px;width:100px;font-size:11px;line-height:13px;color:#000;text-align:center;white-space:nowrap;">120,000</div>
<div style="position:absolute;left:956px;top:741px;width:1px;height:5px;background:#b4b4b4"></div>
<div style="position:absolute;left:906px;top:748px;width:100px;font-size:11px;line-height:13px;color:#000;text-align:center;white-space:nowrap;">140,000</div>
<div style="position:absolute;left:959px;top:748px;width:100px;font-size:11px;line-height:13px;color:#000;text-align:center;white-space:nowrap;">160,000</div>
<div style="position:absolute;left:614px;top:760px;width:200px;font-size:11px;line-height:13px;color:#000;font-weight:bold;text-align:center;white-space:nowrap;">Conditional Mean</div>
<div style="position:absolute;left:1050px;top:152px;width:179px;height:19px;background:linear-gradient(#c3d0df,#dde9f6)"></div>
<div style="position:absolute;left:1054px;top:155px;font-size:11.5px;line-height:13.5px;color:#000;text-align:left;white-space:nowrap;">Statistics</div>
<svg style="position:absolute;left:1196px;top:155px" width="10" height="11" viewBox="0 0 10 11">
<rect x="2" y="1" width="5.2" height="5.2" fill="#000"/><rect x="3.2" y="2.4" width="1.6" height="3.2" fill="#fff"/>
<rect x="1" y="6" width="7.2" height="1.2" fill="#000"/><rect x="4" y="7" width="1.1" height="3.2" fill="#000"/></svg>
<svg style="position:absolute;left:1215px;top:157px" width="8" height="7" viewBox="0 0 8 7">
<path d="M0.6 0.5 L7.4 6.5 M7.4 0.5 L0.6 6.5" stroke="#000" stroke-width="1.8"/></svg>
<div style="position:absolute;left:1050px;top:171px;width:179px;height:615px;background:#fff"></div>
<div style="position:absolute;left:1050px;top:173px;width:178px;height:1px;background:#9a9da2"></div>
<div style="position:absolute;left:1050px;top:172px;width:178px;height:594px;overflow:hidden">
<div style="position:absolute;left:0;top:2px;width:178px;height:14px;background:#dee2e9;border-top:0px solid #a9adb3"></div>
<div style="position:absolute;left:0;top:0px;width:74px;height:14px;font-size:11px;font-weight:bold;line-height:14px;text-align:right;white-space:nowrap">Variable</div>
<div style="position:absolute;left:77px;top:2px;width:1px;height:14px;background:#fff"></div>
<div style="position:absolute;left:0;top:16px;width:178px;height:16px;border-bottom:1px solid #e6e6e6"></div>
<div style="position:absolute;left:77px;top:16px;width:1px;height:16px;background:#e6e6e6"></div>
<div style="position:absolute;left:0;top:16px;width:71px;height:16px;font-size:11px;line-height:16px;text-align:right;white-space:nowrap;letter-spacing:-0.35px;word-spacing:1.5px">Name</div>
<div style="position:absolute;left:84px;top:16px;width:94px;height:16px;font-size:11px;line-height:16px;white-space:nowrap;overflow:hidden;letter-spacing:-0.12px">Sales Price</div>
<div style="position:absolute;left:0;top:32px;width:178px;height:16px;border-bottom:1px solid #e6e6e6"></div>
<div style="position:absolute;left:77px;top:32px;width:1px;height:16px;background:#e6e6e6"></div>
<div style="position:absolute;left:0;top:32px;width:71px;height:16px;font-size:11px;line-height:16px;text-align:right;white-space:nowrap;letter-spacing:-0.35px;word-spacing:1.5px">Sim #</div>
<div style="position:absolute;left:84px;top:32px;width:94px;height:16px;font-size:11px;line-height:16px;white-space:nowrap;overflow:hidden;letter-spacing:-0.12px">1</div>
<div style="position:absolute;left:0;top:48px;width:178px;height:16px;border-bottom:1px solid #e6e6e6"></div>
<div style="position:absolute;left:77px;top:48px;width:1px;height:16px;background:#e6e6e6"></div>
<div style="position:absolute;left:0;top:48px;width:71px;height:16px;font-size:11px;line-height:16px;text-align:right;white-space:nowrap;letter-spacing:-0.35px;word-spacing:1.5px">Units</div>
<div style="position:absolute;left:84px;top:48px;width:94px;height:16px;font-size:11px;line-height:16px;white-space:nowrap;overflow:hidden;letter-spacing:-0.12px">N/A</div>
<div style="position:absolute;left:0;top:64px;width:178px;height:16px;border-bottom:1px solid #e6e6e6"></div>
<div style="position:absolute;left:77px;top:64px;width:1px;height:16px;background:#e6e6e6"></div>
<div style="position:absolute;left:0;top:64px;width:71px;height:16px;font-size:11px;line-height:16px;text-align:right;white-space:nowrap;letter-spacing:-0.35px;word-spacing:1.5px"># of Samples</div>
<div style="position:absolute;left:84px;top:64px;width:94px;height:16px;font-size:11px;line-height:16px;white-space:nowrap;overflow:hidden;letter-spacing:-0.12px">10000</div>
<div style="position:absolute;left:0;top:80px;width:178px;height:16px;border-bottom:1px solid #e6e6e6"></div>
<div style="position:absolute;left:77px;top:80px;width:1px;height:16px;background:#e6e6e6"></div>
<div style="position:absolute;left:0;top:80px;width:71px;height:16px;font-size:11px;line-height:16px;text-align:right;white-space:nowrap;letter-spacing:-0.35px;word-spacing:1.5px"># of Errors</div>
<div style="position:absolute;left:84px;top:80px;width:94px;height:16px;font-size:11px;line-height:16px;white-space:nowrap;overflow:hidden;letter-spacing:-0.12px">0</div>
<div style="position:absolute;left:0;top:96px;width:178px;height:16px;background:#dee2e9;border-top:2px solid #a9adb3"></div>
<div style="position:absolute;left:0;top:95px;width:74px;height:16px;font-size:11px;font-weight:bold;line-height:16px;text-align:right;white-space:nowrap"># Filtered</div>
<div style="position:absolute;left:77px;top:96px;width:1px;height:16px;background:#fff"></div>
<div style="position:absolute;left:0;top:112px;width:178px;height:16px;border-bottom:1px solid #e6e6e6"></div>
<div style="position:absolute;left:77px;top:112px;width:1px;height:16px;background:#e6e6e6"></div>
<div style="position:absolute;left:0;top:112px;width:71px;height:16px;font-size:11px;line-height:16px;text-align:right;white-space:nowrap;letter-spacing:-0.35px;word-spacing:1.5px">This Variable</div>
<div style="position:absolute;left:84px;top:112px;width:94px;height:16px;font-size:11px;line-height:16px;white-space:nowrap;overflow:hidden;letter-spacing:-0.12px">0</div>
<div style="position:absolute;left:0;top:128px;width:178px;height:16px;border-bottom:1px solid #e6e6e6"></div>
<div style="position:absolute;left:77px;top:128px;width:1px;height:16px;background:#e6e6e6"></div>
<div style="position:absolute;left:0;top:128px;width:71px;height:16px;font-size:11px;line-height:16px;text-align:right;white-space:nowrap;letter-spacing:-0.35px;word-spacing:1.5px">All variables</div>
<div style="position:absolute;left:84px;top:128px;width:94px;height:16px;font-size:11px;line-height:16px;white-space:nowrap;overflow:hidden;letter-spacing:-0.12px">0</div>
<div style="position:absolute;left:0;top:144px;width:178px;height:16px;background:#dee2e9;border-top:2px solid #a9adb3"></div>
<div style="position:absolute;left:0;top:143px;width:74px;height:16px;font-size:11px;font-weight:bold;line-height:16px;text-align:right;white-space:nowrap">Location</div>
<div style="position:absolute;left:77px;top:144px;width:1px;height:16px;background:#fff"></div>
<div style="position:absolute;left:0;top:160px;width:178px;height:16px;border-bottom:1px solid #e6e6e6"></div>
<div style="position:absolute;left:77px;top:160px;width:1px;height:16px;background:#e6e6e6"></div>
<div style="position:absolute;left:0;top:160px;width:71px;height:16px;font-size:11px;line-height:16px;text-align:right;white-space:nowrap;letter-spacing:-0.35px;word-spacing:1.5px">Mean</div>
<div style="position:absolute;left:84px;top:160px;width:94px;height:16px;font-size:11px;line-height:16px;white-space:nowrap;overflow:hidden;letter-spacing:-0.12px">$57.01318985967</div>
<div style="position:absolute;left:0;top:176px;width:178px;height:16px;border-bottom:1px solid #e6e6e6"></div>
<div style="position:absolute;left:77px;top:176px;width:1px;height:16px;background:#e6e6e6"></div>
<div style="position:absolute;left:0;top:176px;width:71px;height:16px;font-size:11px;line-height:16px;text-align:right;white-space:nowrap;letter-spacing:-0.35px;word-spacing:1.5px">Minimum</div>
<div style="position:absolute;left:84px;top:176px;width:94px;height:16px;font-size:11px;line-height:16px;white-space:nowrap;overflow:hidden;letter-spacing:-0.12px">$46.103435742226</div>
<div style="position:absolute;left:0;top:192px;width:178px;height:16px;border-bottom:1px solid #e6e6e6"></div>
<div style="position:absolute;left:77px;top:192px;width:1px;height:16px;background:#e6e6e6"></div>
<div style="position:absolute;left:0;top:192px;width:71px;height:16px;font-size:11px;line-height:16px;text-align:right;white-space:nowrap;letter-spacing:-0.35px;word-spacing:1.5px">Maximum</div>
<div style="position:absolute;left:84px;top:192px;width:94px;height:16px;font-size:11px;line-height:16px;white-space:nowrap;overflow:hidden;letter-spacing:-0.12px">$64.966766937222</div>
<div style="position:absolute;left:0;top:208px;width:178px;height:16px;background:#dee2e9;border-top:2px solid #a9adb3"></div>
<div style="position:absolute;left:0;top:207px;width:74px;height:16px;font-size:11px;font-weight:bold;line-height:16px;text-align:right;white-space:nowrap">Spread</div>
<div style="position:absolute;left:77px;top:208px;width:1px;height:16px;background:#fff"></div>
<div style="position:absolute;left:0;top:224px;width:178px;height:16px;border-bottom:1px solid #e6e6e6"></div>
<div style="position:absolute;left:77px;top:224px;width:1px;height:16px;background:#e6e6e6"></div>
<div style="position:absolute;left:0;top:224px;width:71px;height:16px;font-size:11px;line-height:16px;text-align:right;white-space:nowrap;letter-spacing:-0.35px;word-spacing:1.5px">St. dev.</div>
<div style="position:absolute;left:84px;top:224px;width:94px;height:16px;font-size:11px;line-height:16px;white-space:nowrap;overflow:hidden;letter-spacing:-0.12px">3.695465743</div>
<div style="position:absolute;left:0;top:240px;width:178px;height:16px;border-bottom:1px solid #e6e6e6"></div>
<div style="position:absolute;left:77px;top:240px;width:1px;height:16px;background:#e6e6e6"></div>
<div style="position:absolute;left:0;top:240px;width:71px;height:16px;font-size:11px;line-height:16px;text-align:right;white-space:nowrap;letter-spacing:-0.35px;word-spacing:1.5px">Variance</div>
<div style="position:absolute;left:84px;top:240px;width:94px;height:16px;font-size:11px;line-height:16px;white-space:nowrap;overflow:hidden;letter-spacing:-0.12px">13.65646706</div>
<div style="position:absolute;left:0;top:256px;width:178px;height:16px;border-bottom:1px solid #e6e6e6"></div>
<div style="position:absolute;left:77px;top:256px;width:1px;height:16px;background:#e6e6e6"></div>
<div style="position:absolute;left:0;top:256px;width:71px;height:16px;font-size:11px;line-height:16px;text-align:right;white-space:nowrap;letter-spacing:-0.35px;word-spacing:1.5px">CofV</div>
<div style="position:absolute;left:84px;top:256px;width:94px;height:16px;font-size:11px;line-height:16px;white-space:nowrap;overflow:hidden;letter-spacing:-0.12px">0.06481773344</div>
<div style="position:absolute;left:0;top:272px;width:178px;height:16px;background:#dee2e9;border-top:2px solid #a9adb3"></div>
<div style="position:absolute;left:0;top:271px;width:74px;height:16px;font-size:11px;font-weight:bold;line-height:16px;text-align:right;white-space:nowrap">Shape</div>
<div style="position:absolute;left:77px;top:272px;width:1px;height:16px;background:#fff"></div>
<div style="position:absolute;left:0;top:288px;width:178px;height:16px;border-bottom:1px solid #e6e6e6"></div>
<div style="position:absolute;left:77px;top:288px;width:1px;height:16px;background:#e6e6e6"></div>
<div style="position:absolute;left:0;top:288px;width:71px;height:16px;font-size:11px;line-height:16px;text-align:right;white-space:nowrap;letter-spacing:-0.35px;word-spacing:1.5px">Skewness</div>
<div style="position:absolute;left:84px;top:288px;width:94px;height:16px;font-size:11px;line-height:16px;white-space:nowrap;overflow:hidden;letter-spacing:-0.12px">-0.2724309896</div>
<div style="position:absolute;left:0;top:304px;width:178px;height:16px;border-bottom:1px solid #e6e6e6"></div>
<div style="position:absolute;left:77px;top:304px;width:1px;height:16px;background:#e6e6e6"></div>
<div style="position:absolute;left:0;top:304px;width:71px;height:16px;font-size:11px;line-height:16px;text-align:right;white-space:nowrap;letter-spacing:-0.35px;word-spacing:1.5px">Kurtosis</div>
<div style="position:absolute;left:84px;top:304px;width:94px;height:16px;font-size:11px;line-height:16px;white-space:nowrap;overflow:hidden;letter-spacing:-0.12px">2.430279903</div>
<div style="position:absolute;left:0;top:320px;width:178px;height:16px;background:#dee2e9;border-top:2px solid #a9adb3"></div>
<div style="position:absolute;left:0;top:319px;width:74px;height:16px;font-size:11px;font-weight:bold;line-height:16px;text-align:right;white-space:nowrap">Percentiles</div>
<div style="position:absolute;left:77px;top:320px;width:1px;height:16px;background:#fff"></div>
<div style="position:absolute;left:0;top:336px;width:178px;height:16px;border-bottom:1px solid #e6e6e6"></div>
<div style="position:absolute;left:77px;top:336px;width:1px;height:16px;background:#e6e6e6"></div>
<div style="position:absolute;left:0;top:336px;width:71px;height:16px;font-size:11px;line-height:16px;text-align:right;white-space:nowrap;letter-spacing:-0.35px;word-spacing:1.5px">1%</div>
<div style="position:absolute;left:84px;top:336px;width:94px;height:16px;font-size:11px;line-height:16px;white-space:nowrap;overflow:hidden;letter-spacing:-0.12px">$48.396055160740</div>
<div style="position:absolute;left:0;top:352px;width:178px;height:16px;border-bottom:1px solid #e6e6e6"></div>
<div style="position:absolute;left:77px;top:352px;width:1px;height:16px;background:#e6e6e6"></div>
<div style="position:absolute;left:0;top:352px;width:71px;height:16px;font-size:11px;line-height:16px;text-align:right;white-space:nowrap;letter-spacing:-0.35px;word-spacing:1.5px">5%</div>
<div style="position:absolute;left:84px;top:352px;width:94px;height:16px;font-size:11px;line-height:16px;white-space:nowrap;overflow:hidden;letter-spacing:-0.12px">$50.557267582837</div>
<div style="position:absolute;left:0;top:368px;width:178px;height:16px;border-bottom:1px solid #e6e6e6"></div>
<div style="position:absolute;left:77px;top:368px;width:1px;height:16px;background:#e6e6e6"></div>
<div style="position:absolute;left:0;top:368px;width:71px;height:16px;font-size:11px;line-height:16px;text-align:right;white-space:nowrap;letter-spacing:-0.35px;word-spacing:1.5px">15%</div>
<div style="position:absolute;left:84px;top:368px;width:94px;height:16px;font-size:11px;line-height:16px;white-space:nowrap;overflow:hidden;letter-spacing:-0.12px">$52.861243024978</div>
<div style="position:absolute;left:0;top:384px;width:178px;height:16px;border-bottom:1px solid #e6e6e6"></div>
<div style="position:absolute;left:77px;top:384px;width:1px;height:16px;background:#e6e6e6"></div>
<div style="position:absolute;left:0;top:384px;width:71px;height:16px;font-size:11px;line-height:16px;text-align:right;white-space:nowrap;letter-spacing:-0.35px;word-spacing:1.5px">25%</div>
<div style="position:absolute;left:84px;top:384px;width:94px;height:16px;font-size:11px;line-height:16px;white-space:nowrap;overflow:hidden;letter-spacing:-0.12px">$54.385719415114</div>
<div style="position:absolute;left:0;top:400px;width:178px;height:16px;border-bottom:1px solid #e6e6e6"></div>
<div style="position:absolute;left:77px;top:400px;width:1px;height:16px;background:#e6e6e6"></div>
<div style="position:absolute;left:0;top:400px;width:71px;height:16px;font-size:11px;line-height:16px;text-align:right;white-space:nowrap;letter-spacing:-0.35px;word-spacing:1.5px">35%</div>
<div style="position:absolute;left:84px;top:400px;width:94px;height:16px;font-size:11px;line-height:16px;white-space:nowrap;overflow:hidden;letter-spacing:-0.12px">$55.629683146701</div>
<div style="position:absolute;left:0;top:416px;width:178px;height:16px;border-bottom:1px solid #e6e6e6"></div>
<div style="position:absolute;left:77px;top:416px;width:1px;height:16px;background:#e6e6e6"></div>
<div style="position:absolute;left:0;top:416px;width:71px;height:16px;font-size:11px;line-height:16px;text-align:right;white-space:nowrap;letter-spacing:-0.35px;word-spacing:1.5px">45%</div>
<div style="position:absolute;left:84px;top:416px;width:94px;height:16px;font-size:11px;line-height:16px;white-space:nowrap;overflow:hidden;letter-spacing:-0.12px">$56.733561695506</div>
<div style="position:absolute;left:0;top:432px;width:178px;height:16px;border-bottom:1px solid #e6e6e6"></div>
<div style="position:absolute;left:77px;top:432px;width:1px;height:16px;background:#e6e6e6"></div>
<div style="position:absolute;left:0;top:432px;width:71px;height:16px;font-size:11px;line-height:16px;text-align:right;white-space:nowrap;letter-spacing:-0.35px;word-spacing:1.5px">50%</div>
<div style="position:absolute;left:84px;top:432px;width:94px;height:16px;font-size:11px;line-height:16px;white-space:nowrap;overflow:hidden;letter-spacing:-0.12px">$57.238739871587</div>
<div style="position:absolute;left:0;top:448px;width:178px;height:16px;border-bottom:1px solid #e6e6e6"></div>
<div style="position:absolute;left:77px;top:448px;width:1px;height:16px;background:#e6e6e6"></div>
<div style="position:absolute;left:0;top:448px;width:71px;height:16px;font-size:11px;line-height:16px;text-align:right;white-space:nowrap;letter-spacing:-0.35px;word-spacing:1.5px">65%</div>
<div style="position:absolute;left:84px;top:448px;width:94px;height:16px;font-size:11px;line-height:16px;white-space:nowrap;overflow:hidden;letter-spacing:-0.12px">$58.785833184010</div>
<div style="position:absolute;left:0;top:464px;width:178px;height:16px;border-bottom:1px solid #e6e6e6"></div>
<div style="position:absolute;left:77px;top:464px;width:1px;height:16px;background:#e6e6e6"></div>
<div style="position:absolute;left:0;top:464px;width:71px;height:16px;font-size:11px;line-height:16px;text-align:right;white-space:nowrap;letter-spacing:-0.35px;word-spacing:1.5px">75%</div>
<div style="position:absolute;left:84px;top:464px;width:94px;height:16px;font-size:11px;line-height:16px;white-space:nowrap;overflow:hidden;letter-spacing:-0.12px">$59.829681386377</div>
<div style="position:absolute;left:0;top:480px;width:178px;height:16px;border-bottom:1px solid #e6e6e6"></div>
<div style="position:absolute;left:77px;top:480px;width:1px;height:16px;background:#e6e6e6"></div>
<div style="position:absolute;left:0;top:480px;width:71px;height:16px;font-size:11px;line-height:16px;text-align:right;white-space:nowrap;letter-spacing:-0.35px;word-spacing:1.5px">85%</div>
<div style="position:absolute;left:84px;top:480px;width:94px;height:16px;font-size:11px;line-height:16px;white-space:nowrap;overflow:hidden;letter-spacing:-0.12px">$61.079067718665</div>
<div style="position:absolute;left:0;top:496px;width:178px;height:16px;border-bottom:1px solid #e6e6e6"></div>
<div style="position:absolute;left:77px;top:496px;width:1px;height:16px;background:#e6e6e6"></div>
<div style="position:absolute;left:0;top:496px;width:71px;height:16px;font-size:11px;line-height:16px;text-align:right;white-space:nowrap;letter-spacing:-0.35px;word-spacing:1.5px">95%</div>
<div style="position:absolute;left:84px;top:496px;width:94px;height:16px;font-size:11px;line-height:16px;white-space:nowrap;overflow:hidden;letter-spacing:-0.12px">$62.623640747049</div>
<div style="position:absolute;left:0;top:512px;width:178px;height:16px;border-bottom:1px solid #e6e6e6"></div>
<div style="position:absolute;left:77px;top:512px;width:1px;height:16px;background:#e6e6e6"></div>
<div style="position:absolute;left:0;top:512px;width:71px;height:16px;font-size:11px;line-height:16px;text-align:right;white-space:nowrap;letter-spacing:-0.35px;word-spacing:1.5px">99%</div>
<div style="position:absolute;left:84px;top:512px;width:94px;height:16px;font-size:11px;line-height:16px;white-space:nowrap;overflow:hidden;letter-spacing:-0.12px">$63.865865876179</div>
<div style="position:absolute;left:0;top:528px;width:178px;height:16px;border-bottom:1px solid #e6e6e6"></div>
<div style="position:absolute;left:77px;top:528px;width:1px;height:16px;background:#e6e6e6"></div>
<div style="position:absolute;left:0;top:528px;width:71px;height:16px;font-size:11px;line-height:16px;text-align:right;white-space:nowrap;letter-spacing:-0.35px;word-spacing:1.5px"></div>
<div style="position:absolute;left:84px;top:528px;width:94px;height:16px;font-size:11px;line-height:16px;white-space:nowrap;overflow:hidden;letter-spacing:-0.12px"></div>
<div style="position:absolute;left:0;top:544px;width:178px;height:16px;border-bottom:1px solid #e6e6e6"></div>
<div style="position:absolute;left:77px;top:544px;width:1px;height:16px;background:#e6e6e6"></div>
<div style="position:absolute;left:0;top:544px;width:71px;height:16px;font-size:11px;line-height:16px;text-align:right;white-space:nowrap;letter-spacing:-0.35px;word-spacing:1.5px"></div>
<div style="position:absolute;left:84px;top:544px;width:94px;height:16px;font-size:11px;line-height:16px;white-space:nowrap;overflow:hidden;letter-spacing:-0.12px"></div>
<div style="position:absolute;left:0;top:560px;width:178px;height:16px;border-bottom:1px solid #e6e6e6"></div>
<div style="position:absolute;left:77px;top:560px;width:1px;height:16px;background:#e6e6e6"></div>
<div style="position:absolute;left:0;top:560px;width:71px;height:16px;font-size:11px;line-height:16px;text-align:right;white-space:nowrap;letter-spacing:-0.35px;word-spacing:1.5px"></div>
<div style="position:absolute;left:84px;top:560px;width:94px;height:16px;font-size:11px;line-height:16px;white-space:nowrap;overflow:hidden;letter-spacing:-0.12px"></div>
<div style="position:absolute;left:0;top:576px;width:178px;height:16px;border-bottom:1px solid #e6e6e6"></div>
<div style="position:absolute;left:77px;top:576px;width:1px;height:16px;background:#e6e6e6"></div>
<div style="position:absolute;left:0;top:576px;width:71px;height:16px;font-size:11px;line-height:16px;text-align:right;white-space:nowrap;letter-spacing:-0.35px;word-spacing:1.5px"></div>
<div style="position:absolute;left:84px;top:576px;width:94px;height:16px;font-size:11px;line-height:16px;white-space:nowrap;overflow:hidden;letter-spacing:-0.12px"></div>
</div>
<div style="position:absolute;left:1050px;top:765px;width:179px;height:21px;background:linear-gradient(#ffffff,#eef0f3)"></div>
<div style="position:absolute;left:1050px;top:766px;width:40px;height:19px;background:#9fd6d2;border-bottom:1px solid #7aa9a6"></div>
<div style="position:absolute;left:1050px;top:769px;font-size:11.5px;line-height:13.5px;color:#000;text-align:left;white-space:nowrap;">ax rate</div>
<div style="position:absolute;left:1092px;top:766px;width:64px;height:19px;background:#136287;border-right:1px solid #555;border-bottom:2px solid #666"></div>
<div style="position:absolute;left:1092px;top:769px;width:62px;font-size:11px;line-height:13px;color:#fff;text-align:center;white-space:nowrap;">Sales Price</div>
<svg style="position:absolute;left:1157px;top:770px" width="70" height="10" viewBox="0 0 70 10">
<rect x="3" y="1" width="1.3" height="8" fill="#333"/><path d="M10 1 L5 5 L10 9 Z" fill="#333"/>
<path d="M27 1 L22 5 L27 9 Z" fill="#333"/>
<path d="M41 1 L46 5 L41 9 Z" fill="#333"/>
<path d="M58 1 L63 5 L58 9 Z" fill="#333"/><rect x="63.5" y="1" width="1.3" height="8" fill="#333"/>
</svg></body></html>
